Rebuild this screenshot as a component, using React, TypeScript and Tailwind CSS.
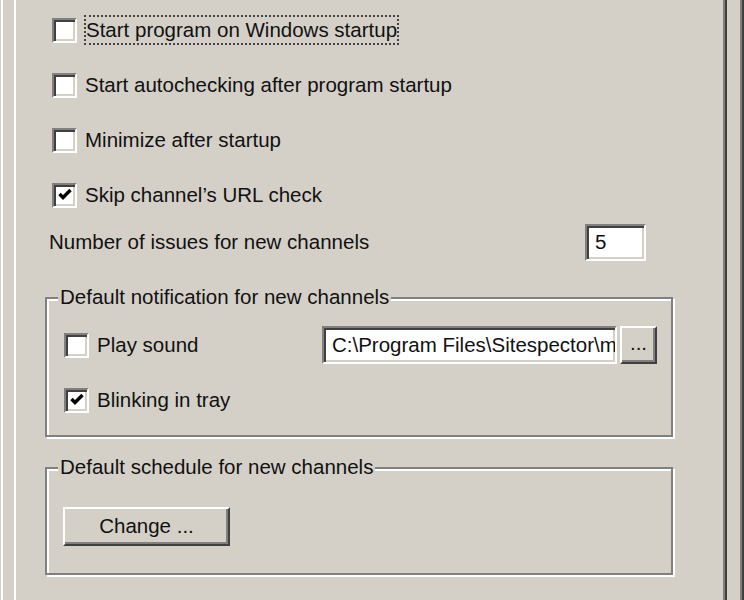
const sunken =
  "border-2 border-t-[#808080] border-l-[#808080] border-r-white border-b-white shadow-[inset_2px_2px_0_#404040,inset_-2px_-2px_0_#d4d0c8]";
const raised =
  "border-2 border-t-white border-l-white border-r-[#404040] border-b-[#404040] shadow-[inset_-2px_-2px_0_#808080] bg-[#d4d0c8]";

function CheckBox({ checked }: { checked?: boolean }) {
  return (
    <div className={`w-[25px] h-[25px] shrink-0 bg-white flex items-center justify-center ${sunken}`}>
      {checked && (
        <svg width="16" height="16" viewBox="0 0 16 16">
          <path d="M2.5 7 L6 10.5 L13.5 3" fill="none" stroke="#000" strokeWidth="3.4" />
        </svg>
      )}
    </div>
  );
}

function CheckRow({ label, checked, focus }: { label: string; checked?: boolean; focus?: boolean }) {
  return (
    <div className="flex items-center h-[26px]">
      <CheckBox checked={checked} />
      {focus ? (
        <span className="ml-[7px] border-2 border-dotted border-[#444] leading-[26px]">{label}</span>
      ) : (
        <span className="ml-[8px]">{label}</span>
      )}
    </div>
  );
}

function GroupBox({ title, className, children }: { title: string; className?: string; children: React.ReactNode }) {
  return (
    <div
      className={`relative ml-[29px] w-[628px] border-2 border-[#808080] shadow-[inset_2px_2px_0_#fff,2px_2px_0_#fff] ${className ?? ""}`}
    >
      <span className="absolute left-[11px] top-[-12px] px-[2px] bg-[#d4d0c8] leading-none">{title}</span>
      {children}
    </div>
  );
}

export default function App() {
  return (
    <div className="w-[744px] h-[600px] overflow-hidden bg-[#d4d0c8] flex text-[20.5px] text-[#111] font-['Liberation_Sans',Arial,sans-serif]">
      <div className="ml-[1px] w-[2px] bg-white" />
      <div className="ml-[11px] w-[713px] h-full border-l-2 border-white border-r-2 border-r-[#404040]">
        <div className="h-full border-r-2 border-[#808080] flex flex-col">
          <div className="pl-[36px] pt-[17px] flex flex-col gap-[29px]">
            <CheckRow label="Start program on Windows startup" focus />
            <CheckRow label="Start autochecking after program startup" />
            <CheckRow label="Minimize after startup" />
            <CheckRow label="Skip channel’s URL check" checked />
          </div>

          <div className="mt-[16px] ml-[33px] w-[597px] h-[37px] flex items-center justify-between">
            <span>Number of issues for new channels</span>
            <div className={`w-[61px] h-[37px] bg-white flex items-center pl-[8px] ${sunken}`}>5</div>
          </div>

          <GroupBox title="Default notification for new channels" className="mt-[36px] pt-[27px] pb-[22px] pl-[17px] pr-[14px]">
            <div className="flex items-center h-[38px]">
              <CheckBox />
              <span className="ml-[8px]">Play sound</span>
              <div className={`ml-auto w-[295px] h-[38px] bg-white flex items-center pl-[8px] overflow-hidden whitespace-nowrap ${sunken}`}>
                C:\Program Files\Sitespector\m
              </div>
              <div className={`ml-[3px] w-[37px] h-[38px] flex items-center justify-center pb-[4px] ${raised}`}>...</div>
            </div>
            <div className="mt-[23px] flex items-center h-[26px]">
              <CheckBox checked />
              <span className="ml-[8px]">Blinking in tray</span>
            </div>
          </GroupBox>

          <GroupBox title="Default schedule for new channels" className="mt-[30px] pt-[38px] pb-[27px] pl-[16px]">
            <div className={`w-[167px] h-[39px] flex items-center justify-center ${raised}`}>Change ...</div>
          </GroupBox>
        </div>
      </div>
      <div className="ml-[13px] w-[2px] bg-[#808080]" />
      <div className="w-[2px] bg-[#404040]" />
    </div>
  );
}
